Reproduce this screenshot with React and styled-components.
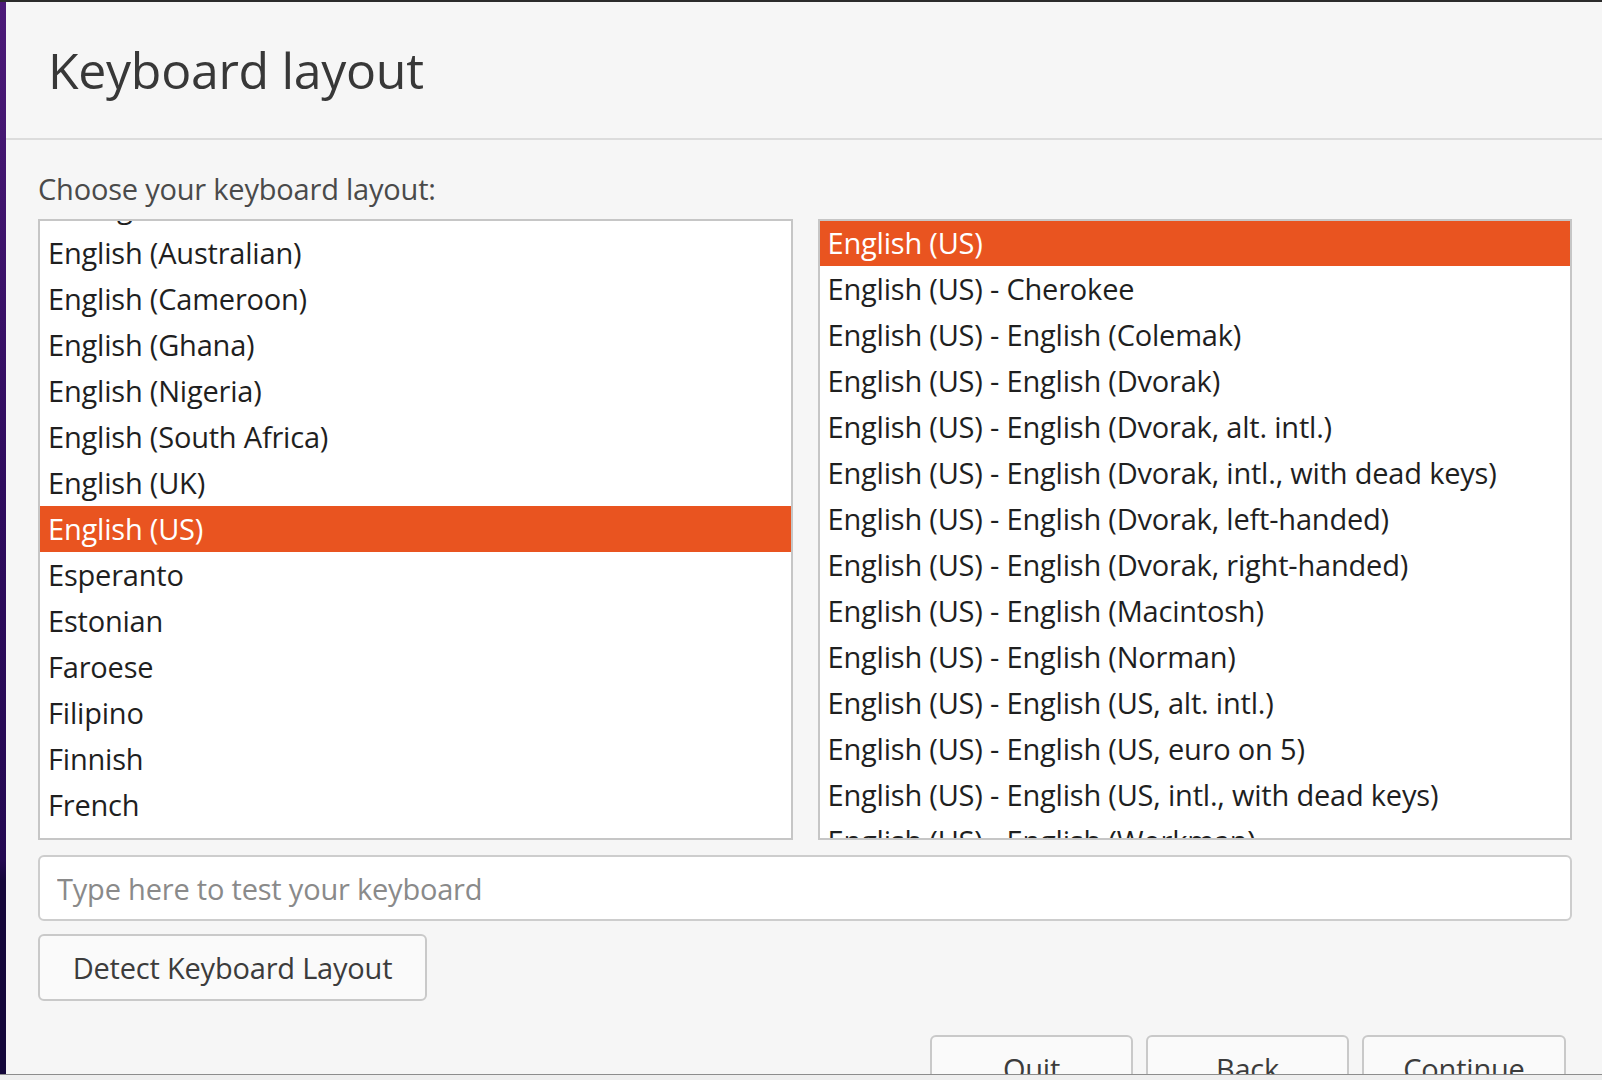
import styled, { createGlobalStyle } from "styled-components";

const GlobalStyle = createGlobalStyle`
  html, body {
    margin: 0;
    padding: 0;
    background: #efefef;
  }
  * {
    box-sizing: border-box;
  }
`;

const FONT = `"Open Sans", "Noto Sans", "DejaVu Sans", sans-serif`;

const LAYOUTS = [
  "Dzongkha",
  "English (Australian)",
  "English (Cameroon)",
  "English (Ghana)",
  "English (Nigeria)",
  "English (South Africa)",
  "English (UK)",
  "English (US)",
  "Esperanto",
  "Estonian",
  "Faroese",
  "Filipino",
  "Finnish",
  "French",
  "French (Canada)",
];

const VARIANTS = [
  "English (US)",
  "English (US) - Cherokee",
  "English (US) - English (Colemak)",
  "English (US) - English (Dvorak)",
  "English (US) - English (Dvorak, alt. intl.)",
  "English (US) - English (Dvorak, intl., with dead keys)",
  "English (US) - English (Dvorak, left-handed)",
  "English (US) - English (Dvorak, right-handed)",
  "English (US) - English (Macintosh)",
  "English (US) - English (Norman)",
  "English (US) - English (US, alt. intl.)",
  "English (US) - English (US, euro on 5)",
  "English (US) - English (US, intl., with dead keys)",
  "English (US) - English (Workman)",
];

// 전체 화면
const Screen = styled.div`
  height: 1080px;
  display: flex;
  flex-direction: column;
  overflow: hidden;
  font-family: ${FONT};
`;
const TopBar = styled.div`
  height: 2px;
  background: #2b2b2b;
  flex-shrink: 0;
`;
const Desktop = styled.div`
  display: flex;
  height: 1073px;
  flex-shrink: 0;
  border-bottom: 1px solid #8d8d8d;
`;
const Wallpaper = styled.div`
  width: 6px;
  flex-shrink: 0;
  background: linear-gradient(#4c1a78 0%, #2f0c5e 45%, #240952 80%, #15073a 82%, #14073a 100%);
`;

// 설치 창
const Window = styled.div`
  flex: 1;
  display: flex;
  flex-direction: column;
  background: #f6f6f6;
  overflow: hidden;
`;
const Header = styled.header`
  height: 138px;
  flex-shrink: 0;
  display: flex;
  align-items: center;
  padding: 0 0 0 42px;
  border-bottom: 2px solid #dcdcdc;
`;
const Title = styled.h1`
  margin: 0;
  font-size: 50px;
  font-weight: 400;
  color: #383838;
  letter-spacing: -0.3px;
`;
const Body = styled.main`
  display: flex;
  flex-direction: column;
  padding: 32px 30px 0 32px;
`;
const Label = styled.p`
  margin: 0;
  font-size: 29px;
  line-height: 34px;
  color: #4a4a4a;
  letter-spacing: -0.2px;
`;

// 목록
const Lists = styled.div`
  margin-top: 13px;
  display: grid;
  grid-template-columns: 1fr 1fr;
  gap: 25px;
  height: 621px;
`;
const ListBox = styled.div`
  border: 2px solid #c6c6c6;
  background: #ffffff;
  overflow: hidden;
`;
const ListInner = styled.ul`
  margin: ${(p) => p.$offset || 0}px 0 0 0;
  padding: 0;
  list-style: none;
`;
const Row = styled.li`
  height: 46px;
  line-height: 46px;
  padding-left: 8px;
  font-size: 29px;
  letter-spacing: -0.2px;
  white-space: nowrap;
  color: ${(p) => (p.$selected ? "#ffffff" : "#1f1f1f")};
  background: ${(p) => (p.$selected ? "#e95420" : "transparent")};
`;

// 입력 및 버튼
const TestInput = styled.input`
  margin-top: 15px;
  height: 66px;
  width: 100%;
  padding: 0 17px;
  border: 2px solid #cdcdcd;
  border-radius: 6px;
  background: #ffffff;
  font-family: ${FONT};
  font-size: 29px;
  letter-spacing: -0.2px;
  color: #1f1f1f;
  outline: none;

  &::placeholder {
    color: #8a8a8a;
  }
`;
const Button = styled.button`
  height: 67px;
  width: ${(p) => p.$width}px;
  padding: 0;
  border: 2px solid #c9c9c9;
  border-radius: 6px;
  background: #fafafa;
  font-family: ${FONT};
  font-size: 29px;
  letter-spacing: -0.2px;
  color: #3c3c3c;
  flex-shrink: 0;
`;
const DetectRow = styled.div`
  margin-top: 13px;
  display: flex;
`;
const Footer = styled.div`
  margin-top: 34px;
  padding-right: 6px;
  display: flex;
  justify-content: flex-end;
  gap: 13px;
`;

function App() {
  return (
    <Screen>
      <GlobalStyle />
      <TopBar />
      <Desktop>
        <Wallpaper />
        <Window>
          <Header>
            <Title>Keyboard layout</Title>
          </Header>
          <Body>
            <Label>Choose your keyboard layout:</Label>
            <Lists>
              <ListBox>
                <ListInner $offset={-37}>
                  {LAYOUTS.map((item) => (
                    <Row key={item} $selected={item === "English (US)"}>
                      {item}
                    </Row>
                  ))}
                </ListInner>
              </ListBox>
              <ListBox>
                <ListInner $offset={-1}>
                  {VARIANTS.map((item, i) => (
                    <Row key={item} $selected={i === 0}>
                      {item}
                    </Row>
                  ))}
                </ListInner>
              </ListBox>
            </Lists>
            <TestInput placeholder="Type here to test your keyboard" />
            <DetectRow>
              <Button $width={389}>Detect Keyboard Layout</Button>
            </DetectRow>
            <Footer>
              <Button $width={203}>Quit</Button>
              <Button $width={203}>Back</Button>
              <Button $width={204}>Continue</Button>
            </Footer>
          </Body>
        </Window>
      </Desktop>
    </Screen>
  );
}

export default App;
